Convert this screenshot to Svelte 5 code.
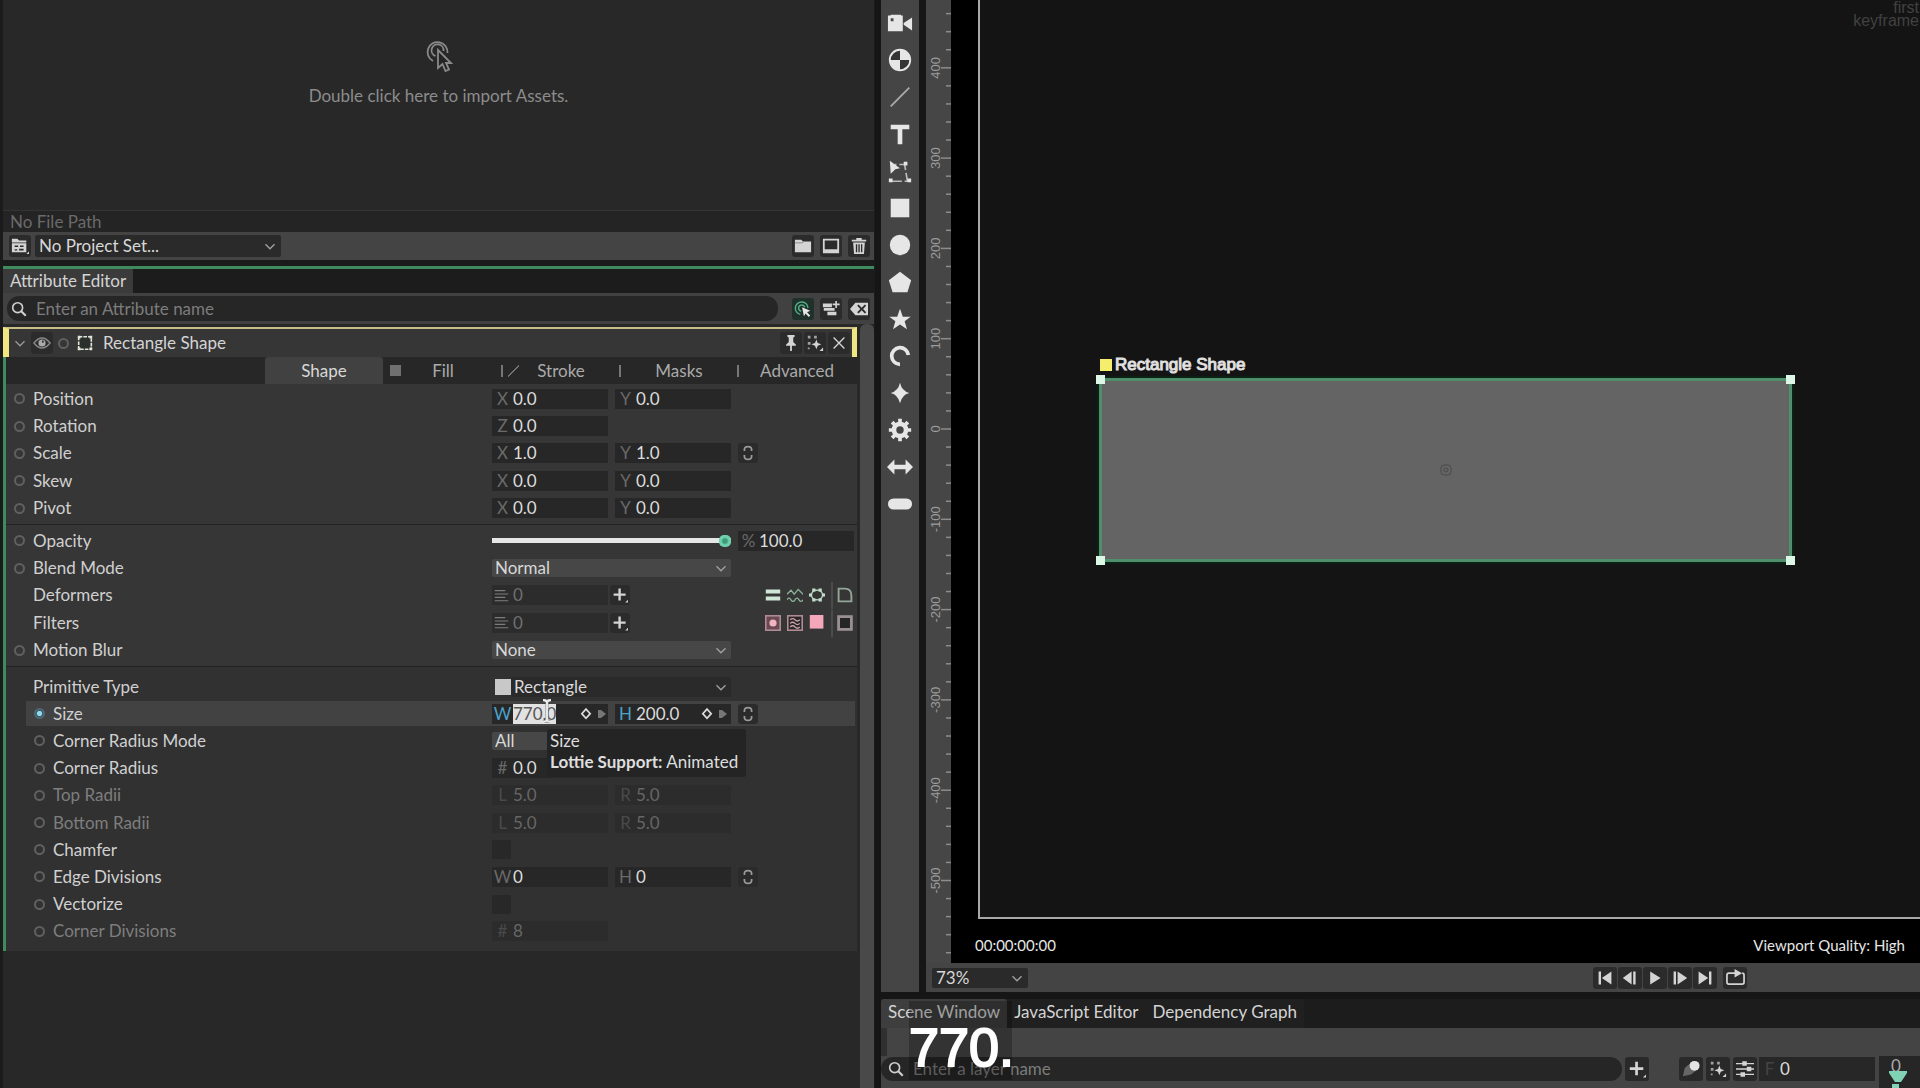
<script>
  const icons = {
    chevron: '<path d="M5 8l5 5 5-5" fill="none" stroke="currentColor" stroke-width="1.5"/>',
    search: '<circle cx="8.500" cy="8.500" r="5.500" fill="none" stroke="currentColor" stroke-width="1.800"/><path d="M12.500 12.500l5 5" stroke="currentColor" stroke-width="2.400"/>',
    project: '<path d="M1 2h6l2 2h8v2H1z"/><path fill-rule="evenodd" d="M1 7h16v10H1zM4 9.500h4v1.500H4zM10 9.500h4v1.500h-4zM4 13.500h3v1.500H4zM9 13h5v2H9z"/><path d="M20 16v3h-3z"/>',
    folder: '<path d="M1 3h7l2 2h9v12H1z"/><path d="M1 6.500h8l2-1.500" fill="none" stroke="#777" stroke-width=".8"/>',
    comp: '<path fill-rule="evenodd" d="M1 2h18v16H1zM3 4v9.500h14V4z"/>',
    trash: '<path d="M7 1h6v2h5v2H2V3h5z"/><path fill-rule="evenodd" d="M3.500 6h13l-1 13h-11zM6.500 8v9H8V8zM9.300 8v9h1.500V8zM12.200 8v9h1.500V8z"/>',
    clickTarget: '<path d="M7 16A7 7 0 1 1 15.500 9M8 12.500A3.500 3.500 0 1 1 12 8" fill="none" stroke="#4fae84" stroke-width="1.600"/><path fill="#e6e6e6" d="M9 8l9 4-3.500 1.500 3.500 3.800-1.600 1.500-3.600-3.800L11 18z"/>',
    layersPlus: '<path d="M1 4h10v4H1zM2 9h12v3H2zM6 13h10v4H6z"/><path d="M14.800 1h1.800v3h3v1.800h-3v3h-1.800v-3h-3V4h3z"/>',
    erase: '<path fill-rule="evenodd" d="M6 3h14v14H6L0 10zM8 6.500l3.500 3.500L8 13.500 9.500 15l3.500-3.500 3.500 3.500 1.500-1.500-3.500-3.500L18 6.500 16.500 5 13 8.500 9.500 5z"/>',
    eye: '<path d="M1 10q9-11 18 0q-9 11-18 0z" fill="none" stroke="#888" stroke-width="1.600"/><circle cx="10" cy="10" r="4" fill="#aaa"/><circle cx="11" cy="8.500" r="1.200" fill="#333"/>',
    shapeBox: '<rect x="3" y="3" width="14" height="14" fill="#2c302c" stroke="#dfe6d8" stroke-width="1.800" stroke-dasharray="4 1.200"/><path fill="#dfe6d8" d="M2 2h3v3H2zM15 2h3v3h-3zM2 15h3v3H2zM15 15h3v3h-3z"/>',
    pin: '<path d="M6 1h8v2l-1.500 1v5l3 3v1H11v6H9v-6H4.500v-1l3-3V4L6 3z"/>',
    sparkle: '<path d="M2 2h3v3H2zM9 2h3v3H9zM2 9h3v3H2zM2 15h2v2H2z" opacity=".7"/><path d="M11.500 6l1.500 4 4 1.500-4 1.500-1.500 4-1.500-4-4-1.500 4-1.500zM19 15v4h-4z"/>',
    close: '<path d="M4 4l12 12M16 4L4 16" fill="none" stroke="currentColor" stroke-width="1.500"/>',
    link: '<path d="M5.500 7.500V6q0-4 4.500-4t4.500 4v1.500M5.500 12.500V14q0 4 4.500 4t4.500-4v-1.500" fill="none" stroke="currentColor" stroke-width="2.200"/>',
    list: '<path d="M1 3.500h14M1 8h18M1 12.500h14M1 17h18" fill="none" stroke="currentColor" stroke-width="1.600"/>',
    plus: '<path d="M8 2h3v6h6v3h-6v6H8v-6H2V8h6z"/><path d="M20 16v3.500h-3.500z"/>',
    bars: '<path fill="#cfe6d6" d="M1 3h18v5H1zM1 12h18v5H1z"/>',
    wave: '<path d="M0 9l5-5 4 5 5-6 6 6M0 16q2.500-4 5 0t5 0 5 0 5 0" fill="none" stroke="#8db59a" stroke-width="1.600"/>',
    hexDots: '<path d="M6 4h8l4 6-4 6H6l-4-6z" fill="none" stroke="#a9c9b2" stroke-width="1.800"/><path fill="#c4dccb" d="M4 2h4v4H4zM12 2h4v4h-4zM0 8h4v4H0zM16 8h4v4h-4zM4 14h4v4H4zM12 14h4v4h-4z"/>',
    corner: '<path d="M2 2h8q8 0 8 9v7H2z" fill="none" stroke="#93a698" stroke-width="2.400"/>',
    glow: '<rect x="1" y="1" width="18" height="18" fill="#6a4a52" stroke="#b08a94" stroke-width="2"/><circle cx="10" cy="10" r="4.500" fill="#f0b4c2"/>',
    warp: '<rect x="1" y="1" width="18" height="18" fill="#2b2628" stroke="#b08a94" stroke-width="2"/><path d="M4 6q3-3 6 0t6 0M4 10.500q3-3 6 0t6 0M4 15q3-3 6 0t6 0" fill="none" stroke="#c9a3ad" stroke-width="1.600"/>',
    pink: '<path fill="#f4a7ba" d="M1 0h17v17H1z"/>',
    frame: '<rect x="2" y="2" width="16" height="16" fill="#262626" stroke="#9a8f92" stroke-width="3.500"/>',
    diamond: '<path d="M10 3l6 6.500-6 6.500-6-6.500z" fill="none" stroke="currentColor" stroke-width="2.400"/>',
    nextKey: '<path d="M2 2h6l10 8-10 8H2z"/>',
    first: '<path d="M2 2h3v16H2zM18 2v16L6 10z"/>',
    prev: '<path d="M12 2v16L1 10zM14 2h3v16h-3z"/>',
    play: '<path d="M4 2l13 8-13 8z"/>',
    next: '<path d="M2 2h3v16H2zM7 2l12 8-12 8z"/>',
    last: '<path d="M2 2l12 8-12 8zM15 2h3v16h-3z"/>',
    loop: '<path d="M10 5.500H3q-2 0-2 2V15q0 2 2 2h14q2 0 2-2V7.500q0-2-2-2" fill="none" stroke="currentColor" stroke-width="1.800"/><path d="M9 1l8 4.500L9 10z"/>',
    comet: '<path d="M1 18L3 9l9-8 7 8-9 7z" fill="#666"/><circle cx="14" cy="6.500" r="5.500" fill="#e4e4e4"/>',
    sliders: '<path d="M0 4h20M0 10h20M0 16h20" stroke="currentColor" stroke-width="1.500"/><path d="M7 1.500h5v5H7zM12 7.500h5v5h-5zM5 13.500h5v5H5z"/>'
  };

  const tools = [
    ['Camera', '<path fill-rule="evenodd" d="M1 6h3V5h11v1h2v17H1zM4 9v3h3V9z"/><path d="M18 14l9-6v14l-9-6z"/>'],
    ['Null', '<circle cx="14" cy="14" r="11" fill="#343434" stroke="#e6e6e6" stroke-width="2"/><path d="M14 14V3a11 11 0 0 1 11 11zM14 14v11a11 11 0 0 1-11-11z"/>'],
    ['Line', '<path d="M4 24L24 4" stroke="#aaa" stroke-width="2"/>'],
    ['Text', '<path d="M4 4h20v5h-7.500v16h-5V9H4z"/>'],
    ['Edit Shape', '<path d="M4 25h18l-3-18H8" fill="none" stroke="#bbb" stroke-width="1.800" stroke-dasharray="12 3"/><path d="M3 3l11 8-5 1-5 5zM18 4h4v4h-4zM2 22h4v4H2zM22 22h4v4h-4z"/>'],
    ['Rectangle', '<rect x="4" y="4" width="20" height="20"/>'],
    ['Ellipse', '<circle cx="14" cy="14" r="11"/>'],
    ['Polygon', '<path d="M14 3l12 9-4 13H6L2 12z"/>'],
    ['Star', '<path d="M14 3l3 8.500h8.500L19 16.500l2.500 8.500L14 20l-7.500 5L9 16.500 2.500 11.500H11z"/>'],
    ['Arc', '<path d="M14 23A9 9 0 1 1 23 13" fill="none" stroke="#e6e6e6" stroke-width="4"/>'],
    ['Super Ellipse', '<path d="M14 3q2 9 10 11q-8 2-10 11q-2-9-10-11q8-2 10-11z"/>'],
    ['Cogwheel', '<circle cx="14" cy="14" r="6.500" fill="none" stroke="#e6e6e6" stroke-width="5"/><path d="M14 2v5M14 21v5M2 14h5M21 14h5M5.500 5.500l3.500 3.500M19 19l3.500 3.500M5.500 22.500L9 19M19 9l3.500-3.500" stroke="#e6e6e6" stroke-width="4"/>'],
    ['Arrow', '<path d="M0 14l8-8v5.500h12V6l8 8-8 8v-5.500H8V22z"/>'],
    ['Capsule', '<rect x="1" y="8" width="26" height="12" rx="6"/>']
  ];

  const transformRows = [
    { label: 'Position', fields: [['X', '0.0'], ['Y', '0.0']] },
    { label: 'Rotation', fields: [['Z', '0.0']] },
    { label: 'Scale', fields: [['X', '1.0'], ['Y', '1.0']], link: true },
    { label: 'Skew', fields: [['X', '0.0'], ['Y', '0.0']] },
    { label: 'Pivot', fields: [['X', '0.0'], ['Y', '0.0']] }
  ];
  const blendRows = [
    { label: 'Opacity', slider: 100 },
    { label: 'Blend Mode', select: 'Normal' },
    { label: 'Deformers', count: '0', nokey: true, set: ['bars', 'wave', 'hexDots', 'corner'] },
    { label: 'Filters', count: '0', nokey: true, set: ['glow', 'warp', 'pink', 'frame'] },
    { label: 'Motion Blur', select: 'None' }
  ];
  const shapeRows = [
    { label: 'Primitive Type', primitive: 'Rectangle', nokey: true },
    { label: 'Size', fields: [['W', '770.0'], ['H', '200.0']], link: true, active: true, sub: true },
    { label: 'Corner Radius Mode', select: 'All', sub: true },
    { label: 'Corner Radius', fields: [['#', '0.0']], sub: true },
    { label: 'Top Radii', fields: [['L', '5.0'], ['R', '5.0']], sub: true, off: true },
    { label: 'Bottom Radii', fields: [['L', '5.0'], ['R', '5.0']], sub: true, off: true },
    { label: 'Chamfer', check: true, sub: true },
    { label: 'Edge Divisions', fields: [['W', '0'], ['H', '0']], link: true, sub: true },
    { label: 'Vectorize', check: true, sub: true },
    { label: 'Corner Divisions', fields: [['#', '8']], sub: true, off: true }
  ];

  const ticks = Array.from({ length: 53 }, (_, i) => {
    const unit = 460 - i * 20;
    return { unit, y: 429 - unit * 0.903, major: unit % 100 === 0 };
  });
</script>

{#snippet icon(name, cls = '')}
  <svg class="icon {cls}" viewBox="0 0 20 20" fill="currentColor" aria-hidden="true">{@html icons[name]}</svg>
{/snippet}

{#snippet tool(name, label, cls = '')}
  <button class="btn {cls}" aria-label={label}>{@render icon(name)}</button>
{/snippet}

{#snippet drop(label, value, cls = '')}
  <span class="drop {cls}">
    <select aria-label={label}><option>{value}</option></select>
    {@render icon('chevron')}
  </span>
{/snippet}

{#snippet row(r)}
  <div class="row" class:sub={r.sub} class:active={r.active} class:off={r.off}>
    <span class="key" class:blank={r.nokey}></span>
    <span class="name">{r.label}</span>
    <div class="values">
      {#if r.fields}
        {#each r.fields as [axis, value], i}
          <label class="field">
            <span class="axis">{axis}</span>
            <input class:selected={r.active && i === 0} {value} disabled={r.off} aria-label="{r.label} {axis}" />
            {#if r.active}
              {@render icon('diamond', 'keyicon')}
              {@render icon('nextKey', 'nextkey')}
            {/if}
          </label>
        {/each}
        {#if r.link}{@render tool('link', 'Link ' + r.label, 'link')}{/if}
      {:else if r.slider}
        <input class="slider" type="range" min="0" max="100" value={r.slider} aria-label="Opacity slider" />
        <label class="field">
          <span class="axis">%</span>
          <input value="100.0" aria-label="Opacity percent" />
        </label>
      {:else if r.select}
        {@render drop(r.label, r.select)}
      {:else if r.primitive}
        <span class="swatch"></span>
        {@render drop(r.label, r.primitive, 'primitive')}
      {:else if r.count}
        <label class="field count">
          {@render icon('list', 'listicon')}
          <input value={r.count} aria-label="{r.label} count" />
        </label>
        {@render tool('plus', 'Add to ' + r.label, 'add')}
        <span class="set">
          {#each r.set as s}
            <button class="mini" aria-label="{r.label} {s}">{@render icon(s)}</button>
          {/each}
        </span>
      {:else if r.check}
        <input class="check" type="checkbox" aria-label={r.label} />
      {/if}
      {#if r.active}
        <div class="tooltip" role="tooltip">
          <div>Size</div>
          <div><b>Lottie Support:</b> Animated</div>
        </div>
        <svg class="ibeam" viewBox="0 0 12 24" aria-hidden="true"><path d="M2 1q3 0 4 2 1-2 4-2M6 3v18M2 23q3 0 4-2 1 2 4 2" fill="none" stroke="#888" stroke-width="3"/><path d="M2 1q3 0 4 2 1-2 4-2M6 3v18M2 23q3 0 4-2 1 2 4 2" fill="none" stroke="#f0f0f0" stroke-width="1.800"/></svg>
      {/if}
    </div>
  </div>
{/snippet}

<div class="app">
  <div class="left">
    <section class="assets">
      <div class="dropzone">
        <svg class="hand" viewBox="-1 0 28 34" fill="none" stroke="#8a8a8a" stroke-width="1.800" aria-hidden="true">
          <path d="M7 23A10 10 0 1 1 21.500 15M9.500 18A6 6 0 1 1 17.500 13" />
          <path d="M12 12v18l4.500-4 3 7 3.500-1.500-3-6.500h5z" fill="#242424" />
        </svg>
        <p>Double click here to import Assets.</p>
      </div>
      <div class="path">No File Path</div>
      <div class="bar">
        {@render tool('project', 'Project settings')}
        {@render drop('Project', 'No Project Set...', 'dark')}
        <div class="actions">
          {@render tool('folder', 'New folder')}
          {@render tool('comp', 'New composition')}
          {@render tool('trash', 'Delete')}
        </div>
      </div>
    </section>

    <section class="editor">
      <div class="tabs"><button class="tab on">Attribute Editor</button></div>
      <div class="find">
        <label class="search">
          {@render icon('search')}
          <input placeholder="Enter an Attribute name" aria-label="Attribute search" />
        </label>
        <div class="actions">
          {@render tool('clickTarget', 'Follow selection', 'green')}
          {@render tool('layersPlus', 'Add layer')}
          {@render tool('erase', 'Clear')}
        </div>
      </div>
      <div class="body">
        <div class="list">
          <header class="head">
            {@render icon('chevron', 'dim')}
            {@render tool('eye', 'Visibility')}
            <span class="key"></span>
            {@render icon('shapeBox', 'shape')}
            <h2>Rectangle Shape</h2>
            {@render tool('pin', 'Pin')}
            {@render tool('sparkle', 'Presets')}
            {@render tool('close', 'Close')}
          </header>
          <div class="panes">
            <button class="pane on">Shape</button>
            <button class="pane"><i class="square"></i><span>Fill</span></button>
            <button class="pane"><i class="sep slash"></i><span>Stroke</span></button>
            <button class="pane"><i class="sep"></i><span>Masks</span></button>
            <button class="pane"><i class="sep"></i><span>Advanced</span></button>
          </div>
          <div class="attrs">
            <div class="group">{#each transformRows as r}{@render row(r)}{/each}</div>
            <div class="group second">{#each blendRows as r}{@render row(r)}{/each}</div>
            <div class="group third">{#each shapeRows as r}{@render row(r)}{/each}</div>
          </div>
        </div>
        <div class="scroll"></div>
      </div>
    </section>
  </div>

  <div class="right">
    <div class="stage">
      <nav class="toolbar" aria-label="Tools">
        {#each tools as [label, art]}
          <button aria-label={label}><svg viewBox="0 0 28 28" fill="#e6e6e6" aria-hidden="true">{@html art}</svg></button>
        {/each}
      </nav>
      <div class="viewer">
        <div class="canvas">
          <div class="ruler">
            <svg width="25" height="963" aria-hidden="true">
              {#each ticks as t}
                <path d="M{t.major ? 15 : 20} {t.y}H25" stroke="#8c8c8c" stroke-width="1.500" />
                {#if t.major}<text x={-t.y} y="14" transform="rotate(-90)" text-anchor="middle">{t.unit}</text>{/if}
              {/each}
            </svg>
          </div>
          <div class="view">
            <div class="frame"></div>
            <div class="mark"><span>first</span><span>keyframe</span></div>
            <div class="tag"><i></i>Rectangle Shape</div>
            <div class="rect">
              <i class="tl"></i><i class="tr"></i><i class="bl"></i><i class="br"></i>
              <svg class="pivot" viewBox="0 0 12 12" fill="none" stroke="#4a4a4a" aria-hidden="true"><rect x="1" y="1" width="10" height="10" rx="3" /><circle cx="6" cy="6" r="2" /></svg>
            </div>
            <div class="status"><span>00:00:00:00</span><span>Viewport Quality: High</span></div>
          </div>
        </div>
        <div class="playbar">
          {@render drop('Zoom', '73%', 'dark zoom')}
          <div class="transport">
            {@render tool('first', 'First frame')}
            {@render tool('prev', 'Previous frame')}
            {@render tool('play', 'Play')}
            {@render tool('next', 'Next frame')}
            {@render tool('last', 'Last frame')}
          </div>
          {@render tool('loop', 'Loop')}
        </div>
      </div>
    </div>

    <section class="scene">
      <div class="tabs">
        <button class="tab on">Scene Window</button>
        <button class="tab">JavaScript Editor</button>
        <button class="tab">Dependency Graph</button>
      </div>
      <div class="menu"></div>
      <div class="layers">
        <label class="search">
          {@render icon('search')}
          <input placeholder="Enter a layer name" aria-label="Layer search" />
        </label>
        {@render tool('plus', 'Add layer', 'boxed')}
        <div class="layertools">
          {@render tool('comet', 'Motion', 'boxed')}
          {@render tool('sparkle', 'Effects', 'boxed')}
          {@render tool('sliders', 'Settings', 'boxed')}
        </div>
        <label class="field frameno"><span class="axis">F</span><input value="0" aria-label="Frame" /></label>
        <div class="timeline">
          <span>0</span>
          <svg viewBox="0 0 18 20" fill="#7fd3b4" aria-hidden="true"><path d="M0 0h18v2l-6 9h-6L0 2zM3 13h7v7H3z" /></svg>
        </div>
      </div>
      <div class="typed">770.</div>
    </section>
  </div>
</div>

<style>
  :global(body) { margin: 0; background: #161616; }
  .app, .app * { box-sizing: border-box; }
  .app {
    display: grid;
    grid-template-columns: minmax(0, 875fr) minmax(0, 1039fr);
    column-gap: 6px;
    height: 100vh;
    overflow: hidden;
    background: #161616;
    color: #d0d0d0;
    font: 17px/22px Lato, "Liberation Sans", sans-serif;
  }
  button, input, select { font: inherit; color: inherit; border: 0; margin: 0; padding: 0; background: none; outline: none; min-width: 0; }
  .icon { display: block; width: 18px; height: 18px; flex: none; }
  .btn { display: grid; place-items: center; width: 22px; height: 22px; flex: none; border-radius: 3px; background: #2b2b2b; color: #d4d4d4; }

  .left { display: flex; flex-direction: column; padding: 0 1px 0 3px; min-height: 0; background: #1b1b1b; }
  .assets { background: #282828; }
  .dropzone { min-height: 210px; display: flex; flex-direction: column; align-items: center; padding-top: 38px; color: #8c8c8c; }
  .hand { width: 28px; height: 34px; }
  .dropzone p { margin: 13px 0 0; }
  .path { border-top: 1px solid #343434; background: #242424; color: #6a6a6a; padding: 1px 7px 0; line-height: 20px; }
  .bar { display: flex; align-items: center; height: 28px; padding: 0 4px 0 6px; background: #444; }
  .actions { margin-left: auto; display: flex; gap: 6px; }

  .drop { display: grid; align-items: center; width: 239px; height: 18px; background: #474747; border-radius: 2px; color: #d8d8d8; }
  .drop > select { grid-area: 1 / 1; appearance: none; width: 100%; height: 100%; padding-left: 3px; line-height: 18px; }
  .drop > :global(.icon) { grid-area: 1 / 1; justify-self: end; margin-right: 1px; pointer-events: none; color: #a0a0a0; }
  .drop.dark { width: 246px; height: 22px; background: #2a2a2a; margin-left: 4px; }
  .drop.dark > select { padding-left: 4px; }
  .drop.dark > :global(.icon) { margin-right: 2px; }

  .editor { flex: 1; min-height: 0; display: flex; flex-direction: column; margin-top: 6px; border-top: 3px solid #3f8a5f; background: #1b1b1b; }
  .tabs { display: flex; background: #1c1c1c; }
  .tab { padding: 0 7px; line-height: 24px; color: #d4d4d4; white-space: nowrap; }
  .tab.on { background: #3b3b3b; }
  .find { display: flex; align-items: center; height: 31px; padding: 0 4px; background: #414141; }
  .search { display: flex; align-items: center; gap: 8px; flex: 1; height: 25px; padding-left: 3px; border-radius: 12px; background: #262626; }
  .search input { flex: 1; line-height: 22px; }
  .search input::placeholder { color: #7c7c7c; opacity: 1; }
  .find .actions { margin-left: 14px; }
  .btn.green { background: #20302a; }

  .body { flex: 1; min-height: 0; display: flex; gap: 3px; padding-top: 3px; background: #282828; }
  .list { flex: 1; }
  .scroll { width: 14px; border-radius: 6px 6px 0 0; background: #494949; margin-top: -3px; }
  .head { display: flex; align-items: center; height: 30px; border: solid #f0e682; border-width: 2px 5px 0 6px; border-top-color: #c8be86; background: #363637; gap: 2px; padding: 0 2px; }
  .head h2 { flex: 1; margin: 0 0 0 7px; font-size: 17px; font-weight: 400; color: #d4d4d4; }
  .head .key { margin: 0 5px 0 3px; }
  .head :global(.dim) { color: #999; }
  .panes { display: flex; justify-content: flex-end; height: 27px; padding-right: 2px; background: #272727; border-left: 3px solid #3f8a5f; }
  .pane { display: grid; grid-template-columns: 18px 1fr 16px; align-items: center; width: 118px; color: #aaa; text-align: center; }
  .pane.on { display: block; background: #414141; color: #d8d8d8; border-radius: 3px 3px 0 0; }
  .square { width: 11px; height: 11px; margin-left: 7px; background: #707070; }
  .sep { width: 2px; height: 12px; background: #777; }
  .slash { width: 18px; background: linear-gradient(#777, #777) 0 0 / 2px 100% no-repeat, linear-gradient(135deg, transparent 44%, #77706c 44% 56%, transparent 56%) 7px 0 / 11px 100% no-repeat; }
  .attrs { border-left: 3px solid #3f8a5f; background: #363636; }
  .group { display: grid; grid-auto-rows: minmax(27px, 1fr); min-height: 140px; padding: 1px 0 2px; }
  .group.second { min-height: 142px; padding: 2px 0; border-top: 1px solid #222; }
  .group.third { min-height: 285px; padding: 6px 0; border-top: 1px solid #222; background: #313131; }
  .row { display: flex; align-items: center; padding: 0 3px 0 8px; }
  .row.sub { margin-left: 20px; }
  .row.active { background: linear-gradient(#424242, #424242) 0 1px / calc(100% - 2px) 25px no-repeat; }
  .row.off { color: #7e7e7e; }
  .key { width: 11px; height: 11px; flex: none; border: 2px solid #606060; border-radius: 50%; }
  .key.blank { border-color: transparent; }
  .active .key { border-color: #4d6872; background: radial-gradient(#8fd8ee 45%, #3e5963 60%); }
  .name { flex: 1; padding-left: 8px; white-space: nowrap; }
  .values { display: flex; align-items: center; gap: 7px; width: 362px; flex: none; position: relative; }
  .field { display: flex; align-items: center; width: 116px; height: 20px; background: #272727; color: #dcdcdc; }
  .field .axis { width: 21px; flex: none; text-align: center; color: #6a6a6a; }
  .field input { width: 40px; flex: 1; height: 20px; line-height: 20px; }
  .off .field { background: #2c2c2c; color: #666; }
  .off .field input { color: #666; }
  .off .field .axis { color: #4a4a4a; }
  .active .axis { color: #4aa3cc; }
  .field input.selected { flex: 0 0 43px; margin-right: 23px; background: #e2e2e2; color: #555; }
  .field :global(.keyicon) { width: 14px; height: 14px; }
  .field :global(.nextkey) { width: 10px; height: 10px; margin: 0 3px 0 4px; color: #777; }
  .btn.link { width: 20px; height: 20px; color: #9a9a9a; }
  .btn.link :global(.icon) { width: 16px; height: 16px; }
  .slider { appearance: none; width: 239px; height: 12px; background: linear-gradient(#e6e6e6, #e6e6e6) 0 50% / 100% 5px no-repeat; border-radius: 3px; }
  .slider::-webkit-slider-thumb { appearance: none; width: 12px; height: 12px; border-radius: 5px; background: radial-gradient(#3e9c7b 25%, #6fd0ae 45%); }
  .field.count { color: #707070; background: #2c2c2c; }
  .field :global(.listicon) { width: 15px; height: 15px; margin: 0 4px 0 2px; color: #7d7d7d; }
  .btn.add { width: 20px; height: 20px; margin-left: -5px; }
  .btn.add :global(.icon) { width: 16px; height: 16px; }
  .set { margin-left: auto; display: flex; gap: 6px; padding-right: 1px; }
  .mini :global(.icon) { width: 16px; height: 16px; }
  .mini:last-child { border-left: 2px solid #4c4c4c; padding: 5px 0 6px 4px; margin: -5px 0 -6px; }
  .swatch { width: 16px; height: 16px; margin: 0 -7px 0 3px; background: #c8c8c8; }
  .drop.primitive { width: 220px; height: 20px; background: #2a2a2a; }
  .check { appearance: none; width: 19px; height: 19px; background: #282828; border-radius: 2px; }
  .tooltip { position: absolute; z-index: 2; left: 55px; top: 25px; padding: 1px 8px 5px 3px; border-radius: 3px; background: #242424; color: #dedede; line-height: 21px; white-space: nowrap; }
  .tooltip b { font-weight: 700; }
  .ibeam { position: absolute; left: 49px; top: -5px; width: 12px; height: 24px; }

  .right { display: flex; flex-direction: column; gap: 7px; min-width: 0; min-height: 0; }
  .stage { flex: 1; min-height: 0; display: flex; gap: 7px; }
  .toolbar { width: 38px; display: grid; grid-auto-rows: 37px; align-content: start; padding-top: 4px; background: #454545; }
  .toolbar button { display: grid; place-items: center; }
  .toolbar svg { width: 26px; height: 26px; }
  .viewer { flex: 1; min-width: 0; display: flex; flex-direction: column; background: #444; }
  .canvas { flex: 1; min-height: 0; display: flex; }
  .ruler { width: 25px; overflow: hidden; background: #464646; }
  .ruler svg { display: block; }
  .ruler text { font: 13px "Liberation Sans", sans-serif; fill: #9c9c9c; }
  .view { position: relative; flex: 1; overflow: hidden; background: #000; color: #e6e6e6; }
  .frame { position: absolute; inset: 0 0 44px 27px; border: solid #a8a8a8; border-width: 0 0 2px 2px; background: #141414; }
  .mark { position: absolute; top: 1px; right: 1px; display: flex; flex-direction: column; align-items: flex-end; font: 16px/13px "Liberation Sans", sans-serif; color: #414141; }
  .tag { position: absolute; left: 149px; top: 355px; display: flex; align-items: center; gap: 3px; font: 17px/20px "Liberation Sans", sans-serif; -webkit-text-stroke: 1px #e0e0e0; }
  .tag i { width: 12px; height: 12px; background: #f4ee6c; }
  .rect { position: absolute; left: 148px; top: 378px; width: 693px; height: 184px; border: 3px solid #4f8f6b; outline: 2px solid #0c2014; background: #646464; }
  .rect i { position: absolute; width: 9px; height: 9px; background: #dcf7e6; }
  .tl { left: -6px; top: -6px; }
  .tr { right: -6px; top: -6px; }
  .bl { left: -6px; bottom: -6px; }
  .br { right: -6px; bottom: -6px; }
  .pivot { position: absolute; left: calc(50% - 6px); top: calc(50% - 6px); width: 12px; height: 12px; }
  .status { position: absolute; left: 24px; right: 15px; bottom: 9px; display: flex; justify-content: space-between; font-size: 15px; line-height: 18px; }

  .playbar { display: flex; align-items: center; gap: 6px; height: 29px; padding: 0 173px 0 2px; background: #444; }
  .drop.zoom { width: 96px; height: 20px; }
  .transport { margin-left: auto; display: flex; gap: 1px; }
  .playbar .btn { width: 24px; }
  .playbar .btn :global(.icon) { width: 16px; height: 16px; }
  .playbar > .btn :global(.icon) { width: 19px; height: 19px; }

  .scene { position: relative; height: 89px; background: #444; }
  .scene .tabs { height: 29px; }
  .scene .tab { line-height: 24px; padding-bottom: 3px; background: #202020; }
  .scene .tab.on { background: #3e3e3e; border-radius: 3px 3px 0 0; }
  .menu { height: 28px; border-left: 6px solid #303030; }
  .layers { display: flex; align-items: center; height: 25px; }
  .layers .search { height: 24px; padding-left: 6px; }
  .layers .btn { width: 24px; height: 24px; background: #292929; }
  .layers > .btn { margin-left: 3px; }
  .layertools { display: flex; gap: 3px; margin: 0 2px 0 30px; }
  .field.frameno { height: 24px; }
  .frameno .axis { color: #444; }
  .timeline { position: relative; width: 41px; align-self: flex-start; height: 34px; margin-left: 4px; padding-left: 12px; background: #262626; line-height: 20px; color: #aaa; }
  .timeline svg { position: absolute; left: 10px; top: 15px; width: 18px; height: 20px; }
  .typed { position: absolute; left: 28px; top: 2px; width: 103px; height: 79px; padding-top: 22px; background: rgba(0, 0, 0, 0.25); color: #fff; font: 54px/48px "Liberation Sans", sans-serif; -webkit-text-stroke: 2px #fff; }
</style>
